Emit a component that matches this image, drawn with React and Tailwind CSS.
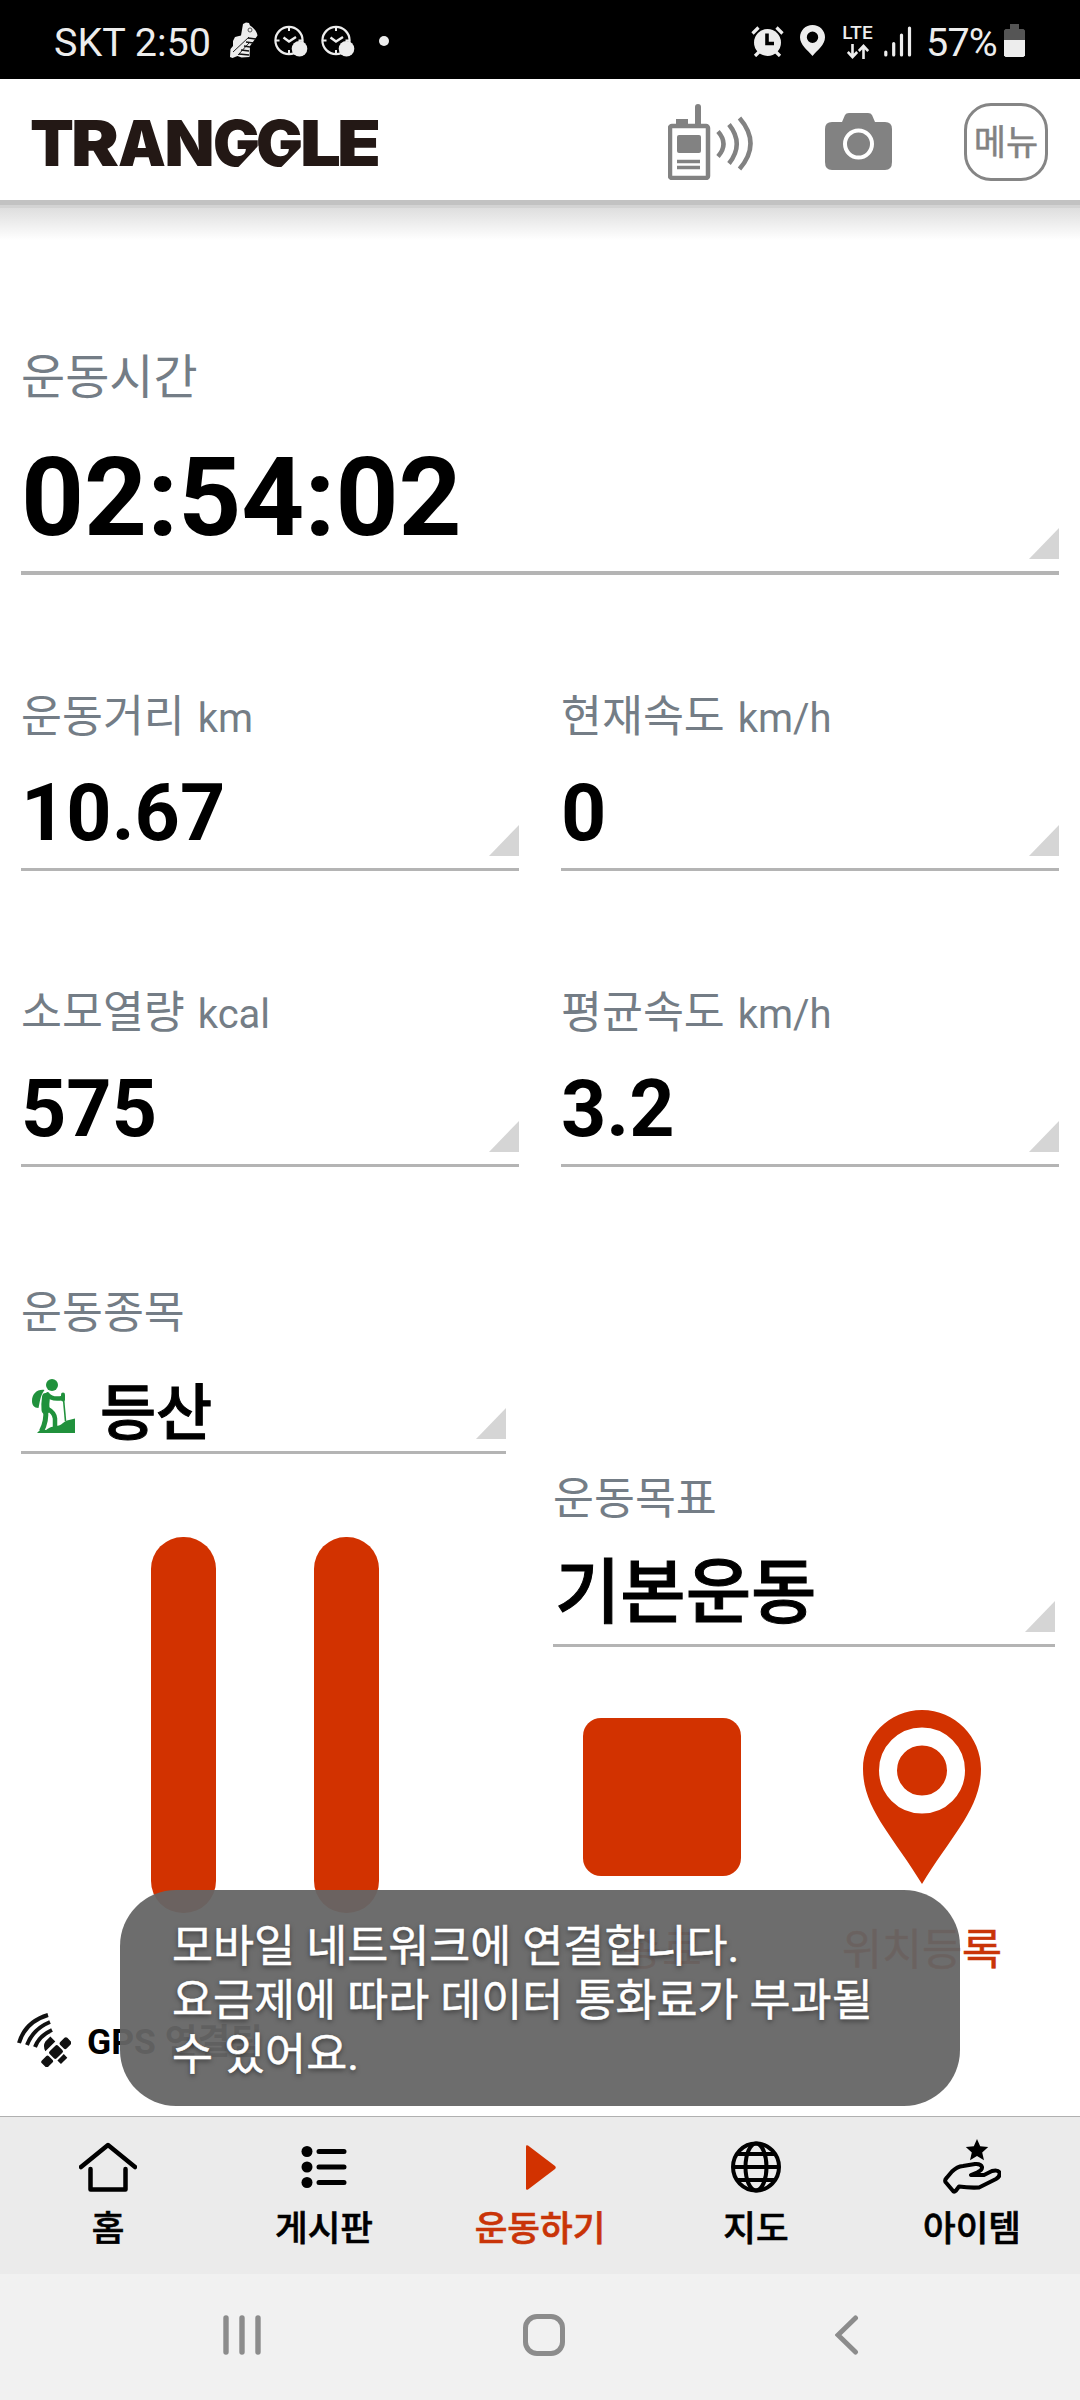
import React from "react";

const StatusClock = () => (
  <svg className="w-[34px] h-[32px]" viewBox="0 0 34 32" fill="none">
    <circle cx="15" cy="15.5" r="13.6" stroke="#ededed" strokeWidth="2.2" />
    <path d="M15 2v4M15 25v4M1.5 15.5h4M24.5 15.5h4" stroke="#ededed" strokeWidth="2" />
    <path d="M9.5 12.5l5.5 4 7-4.5" stroke="#ededed" strokeWidth="2.4" />
    <circle cx="25.5" cy="23.8" r="7.8" fill="#ededed" />
  </svg>
);

const StatusBar = () => (
  <div className="h-[79px] bg-black flex items-center text-[#ededed] text-[39.5px] leading-[40px] pl-[54px] pr-[55px] pt-[2px]">
    <span className="w-[175px] whitespace-nowrap pt-[4px]">SKT 2:50</span>
    <svg className="w-[29px] h-[38px] mr-4" viewBox="0 0 29 38">
      <path d="M14 2l3-1.500 3 .5 1 2.500c4 2.500 7 6 7.500 10l-3.500 5-4 5.500-.500 11-8 .5-4-1.500-5 2-2.500-1 .5-8 2.500-3 0-5 2-4 6-1.500z" fill="#ededed" />
      <path d="M4 30L20 15M9 33l11-12" stroke="#222" strokeWidth="1" fill="none" />
      <path d="M19 16l8 1M17 20l7.500 1M15 24l6 1M12 28l8 1M10 32l10 1" stroke="#111" strokeWidth="1.300" fill="none" />
      <circle cx="21" cy="8" r="2" fill="none" stroke="#555" strokeWidth="1" />
    </svg>
    <div className="flex gap-[13px]">
      <StatusClock />
      <StatusClock />
    </div>
    <div className="w-[10px] h-[10px] ml-[24px] rounded-full bg-[#ededed]" />

    <svg className="w-[33px] h-[32px] ml-auto" viewBox="0 0 33 32">
      <circle cx="16.500" cy="17.500" r="13.500" fill="#ededed" />
      <path d="M1.500 8.500l6-6M31.500 8.500l-6-6M4 31l4-4M29 31l-4-4" stroke="#ededed" strokeWidth="3.200" />
      <path d="M16 8.500v10h7" stroke="#000" strokeWidth="3.600" fill="none" />
    </svg>
    <svg className="w-[25px] h-[31px] ml-4" viewBox="0 0 25 31">
      <path fillRule="evenodd" d="M12.500 0C5.500 0 0 5.500 0 12.300 0 20 7.500 25 12.500 31 17.500 25 25 20 25 12.300 25 5.500 19.500 0 12.500 0zm0 6.500a5.700 5.700 0 1 1 0 11.400 5.700 5.700 0 0 1 0-11.400z" fill="#ededed" />
    </svg>
    <div className="w-[31px] ml-[17px] mt-[2px] flex flex-col items-center">
      <span className="text-[19px] leading-[16px] font-medium">LTE</span>
      <svg className="w-[22px] h-[15px] mt-[3px]" viewBox="0 0 22 15">
        <path d="M5.500 0v13M.8 8l4.700 5 4.700-5M16.500 15V2M11.800 7l4.700-5 4.700 5" stroke="#ededed" strokeWidth="2.600" fill="none" />
      </svg>
    </div>
    <svg className="w-[28px] h-[31px] ml-[11px] mt-[2px]" viewBox="0 0 28 31">
      <path d="M1.800 26v3M9.700 17.500V29M17.500 9v20M25.500 2v27" stroke="#ededed" strokeWidth="3.200" strokeLinecap="round" />
    </svg>
    <span className="ml-[14px] w-[71px] tracking-[-0.800px] whitespace-nowrap pt-[4px]">57%</span>
    <svg className="w-[21px] h-[33px] ml-[7px]" viewBox="0 0 21 33">
      <path d="M6 0h9v5h4.500l1.500 1.500V16H0V6.500L1.500 5H6z" fill="#555" />
      <path d="M0 16h21v15.500l-1.500 1.500h-18L0 31.500z" fill="#ededed" />
    </svg>
  </div>
);

const Logo = () => (
  <svg className="w-[350px] h-[60px] overflow-visible" viewBox="0 0 350 60">
    <text y="55.500" fill="#231815" className="font-['Inter'] font-black text-[63px]">
      <tspan x="-1" textLength="44" lengthAdjust="spacingAndGlyphs">T</tspan>
      <tspan x="40" textLength="48" lengthAdjust="spacingAndGlyphs">R</tspan>
      <tspan x="87" textLength="48" lengthAdjust="spacingAndGlyphs">A</tspan>
      <tspan x="133.500" textLength="50" lengthAdjust="spacingAndGlyphs">N</tspan>
      <tspan x="182" textLength="47" lengthAdjust="spacingAndGlyphs">G</tspan>
      <tspan x="225" textLength="47" lengthAdjust="spacingAndGlyphs">G</tspan>
      <tspan x="269" textLength="41" lengthAdjust="spacingAndGlyphs">L</tspan>
      <tspan x="306" textLength="44" lengthAdjust="spacingAndGlyphs">E</tspan>
    </text>
    {/* slanted corner of the two Gs */}
    <path d="M227.500 35.500v22H207zM271.500 35.500v22H250z" fill="#fff" />
  </svg>
);

const Header = () => (
  <>
    <div className="h-[121px] bg-white flex items-center pl-[31px] pr-8">
      <Logo />
      <svg className="w-[85px] h-[76px] ml-auto mt-[5px]" viewBox="0 0 85 76" fill="none">
        <rect x="2" y="22" width="38" height="52" rx="2" stroke="#828282" strokeWidth="4.500" />
        <path d="M8 15h12v6H8z" fill="#828282" />
        <path d="M30 3v18" stroke="#828282" strokeWidth="6" strokeLinecap="round" />
        <rect x="9" y="31" width="24" height="18" rx="2" fill="#828282" />
        <path d="M9 57.500h23M9 63.500h23" stroke="#828282" strokeWidth="3.500" />
        <path d="M50 27.500q11 12.500 0 25M61 20.500q15.500 19.500 0 39M71.500 14q22 25.500 0 51" stroke="#828282" strokeWidth="4.500" />
      </svg>
      <svg className="w-[67px] h-[57px] ml-[72px] mt-1" viewBox="0 0 67 57">
        <path d="M7 9h10l3-7q1-2 4-2h19q3 0 4 2l3 7h10q7 0 7 7v33q0 8-7 8H7q-7 0-7-8V16q0-7 7-7z" fill="#828282" />
        <circle cx="33.500" cy="31" r="13.500" fill="none" stroke="#fff" strokeWidth="4" />
      </svg>
      <div className="w-[84px] h-[78px] ml-[72px] mt-1 pt-[6px] rounded-[27px] border-[3px] border-[#858585] text-[#828282] flex items-center justify-center text-[35px] [-webkit-text-stroke:0.5px]">
        메뉴
      </div>
    </div>
    <div className="h-[5px] bg-[#c2c2c2]" />
    <div className="h-[3px] bg-[#d3d3d3]" />
    <div className="h-8 bg-gradient-to-b from-[#dedede] to-white" />
  </>
);

const Corner = () => (
  <svg className="w-[30px] h-[31px] mb-3 ml-auto" viewBox="0 0 30 31">
    <path d="M30 0v31H0z" fill="#d5d5d5" />
  </svg>
);

const Metric = ({ label, unit, value }) => (
  <div className="h-[182px]">
    <div className="h-14 leading-[56px] text-[44.5px] text-[#747d86] flex">
      {label}
      <span className="text-[40px] ml-[13px] pt-[2px]">{unit}</span>
    </div>
    <div className="h-[126px] border-b-[3px] border-[#b4b4b4] flex items-end">
      <span className="self-start mt-7 text-[79px] leading-[80px] font-bold">{value}</span>
      <Corner />
    </div>
  </div>
);

const Hiker = () => (
  <svg className="w-[43px] h-[54px]" viewBox="0 0 43 54" fill="none">
    <circle cx="20" cy="6" r="6" fill="#20913c" />
    <path d="M12.500 11C5 10 0 15 0 22c0 4 2 7 6.500 7C8 23 8 17 12.500 11z" fill="#20913c" />
    <path d="M14 18q-1 7-.5 13" stroke="#20913c" strokeWidth="8" strokeLinecap="round" />
    <path d="M15.500 15.500q4 5.500 15 3.500" stroke="#20913c" strokeWidth="4.500" strokeLinecap="round" />
    <path d="M13.500 30q1.500 12-4 22" stroke="#20913c" strokeWidth="5" />
    <path d="M15 29.500q7.500 4 8 10v9" stroke="#20913c" strokeWidth="4.500" />
    <path d="M31 15.500v5" stroke="#20913c" strokeWidth="4" strokeLinecap="round" />
    <path d="M31.500 20l2 22" stroke="#20913c" strokeWidth="1.600" />
    <path d="M5 54l4-4 5 1c5-4 9-3.500 13-4.500 3-1 5-4 8-5L43 39.500V54z" fill="#20913c" />
  </svg>
);

const tabs = [
  {
    name: "홈",
    icon: (
      <svg className="w-[58px] h-[54px]" viewBox="0 0 58 54" fill="none" stroke="currentColor" strokeWidth="4.500" strokeLinecap="round" strokeLinejoin="round">
        <path d="M2 27L29 5l27 22M11.500 29v20.500h35V29" />
      </svg>
    ),
  },
  {
    name: "게시판",
    icon: (
      <svg className="w-[46px] h-[54px]" viewBox="0 0 46 54" stroke="currentColor" strokeWidth="5" strokeLinecap="round">
        <path d="M18 11.500h25M18 27h25M18 42.500h25" />
        <g fill="currentColor" stroke="none">
          <circle cx="6" cy="11.500" r="5.500" />
          <circle cx="6" cy="27" r="5.500" />
          <circle cx="6" cy="42.500" r="5.500" />
        </g>
      </svg>
    ),
  },
  {
    name: "운동하기",
    active: true,
    icon: (
      <svg className="w-[30px] h-[54px] ml-[2px]" viewBox="0 0 30 54" fill="#d23200">
        <path d="M0 6.500q0-2 2-1L29 26q1.500 1.500 0 3L2 49.500q-2 1-2-1z" />
      </svg>
    ),
  },
  {
    name: "지도",
    icon: (
      <svg className="w-[50px] h-[54px]" viewBox="0 0 50 54" fill="none" stroke="currentColor" strokeWidth="4">
        <ellipse cx="25" cy="27" rx="23" ry="23.500" />
        <ellipse cx="25" cy="27" rx="10.500" ry="23.500" />
        <path d="M2 27h46M6 14h38M6 40h38" />
      </svg>
    ),
  },
  {
    name: "아이템",
    icon: (
      <svg className="w-[58px] h-[56px]" viewBox="0 0 58 56" fill="none" stroke="currentColor" strokeWidth="4" strokeLinejoin="round">
        <path d="M34 0l3.200 7.300 8 .8-6 5.300 1.800 7.900-7-4.200-7 4.200 1.800-7.900-6-5.300 8-.8z" fill="currentColor" stroke="none" />
        <path d="M10.500 52.500L2.500 43q-1-2 1-4L9 32.500q5-5 11-5.500l12-2q6-.5 7 3 .5 3-5 5.500L28 36h13l8-4q6-1.500 7.500 1.500 1 4-3.500 6.500L36 48.500q-10 .5-20-1l-3 4q-1.500 1.500-2.500 1z" />
      </svg>
    ),
  },
];

const TabBar = () => (
  <div className="h-[158px] bg-[#ebebeb] border-t border-[#b0b0b0] grid grid-cols-5">
    {tabs.map((tab) => (
      <div
        key={tab.name}
        className={
          tab.active
            ? "flex flex-col items-center pt-[22px] text-[#c93408]"
            : "flex flex-col items-center pt-[22px] text-black"
        }
      >
        <div className="h-14 flex items-center">{tab.icon}</div>
        <span className="mt-[13px] text-[35.500px] leading-[42px] font-medium [-webkit-text-stroke:0.6px]">{tab.name}</span>
      </div>
    ))}
  </div>
);

const App = () => {
  return (
    <div className="relative w-[1080px] h-[2400px] overflow-hidden bg-white text-black font-['Roboto','Noto_Sans_CJK_KR',sans-serif]">
      <StatusBar />
      <Header />

      <div className="h-[1876px] pl-[21px] pr-[21px] pt-[110px]">
        <div className="h-[225px]">
          <div className="h-14 leading-[56px] text-[48px] text-[#747d86]">운동시간</div>
          <div className="h-[169px] border-b-4 border-[#b4b4b4] flex items-end">
            <span className="self-start mt-[42px] text-[110px] leading-[100px] font-bold">02:54:02</span>
            <Corner />
          </div>
        </div>

        <div className="grid grid-cols-2 gap-x-[42px] gap-y-[114px] mt-[114px]">
          <Metric label="운동거리" unit="km" value="10.67" />
          <Metric label="현재속도" unit="km/h" value="0" />
          <Metric label="소모열량" unit="kcal" value="575" />
          <Metric label="평균속도" unit="km/h" value="3.2" />
        </div>

        <div className="flex h-[720px] mt-[118px]">
          <div className="w-[485px]">
            <div className="h-14 leading-[56px] text-[44.5px] text-[#747d86]">운동종목</div>
            <div className="h-[113px] border-b-[3px] border-[#b4b4b4] flex items-end">
              <div className="self-start mt-[38px] ml-[11px]">
                <Hiker />
              </div>
              <span className="self-start mt-[43px] ml-[25px] text-[61px] leading-[60px] font-medium [-webkit-text-stroke:1px]">등산</span>
              <Corner />
            </div>
            <div className="flex gap-[98px] ml-[130px] mt-[83px]">
              <div className="w-[65px] h-[376px] rounded-[32px] bg-[#d23200]" />
              <div className="w-[65px] h-[376px] rounded-[32px] bg-[#d23200]" />
            </div>
          </div>

          <div className="w-[502px] ml-[47px] pt-[186px]">
            <div className="h-14 leading-[56px] text-[44.5px] text-[#747d86]">운동목표</div>
            <div className="h-[120px] border-b-[3px] border-[#b4b4b4] flex items-end">
              <span className="self-start mt-[30px] ml-[2px] text-[71px] leading-[72px] font-medium [-webkit-text-stroke:1px]">기본운동</span>
              <Corner />
            </div>
            <div className="flex mt-[63px] text-[43.5px] leading-[56px] text-[#c93408]">
              <div className="w-[158px] ml-[30px] flex flex-col items-center">
                <div className="w-[158px] h-[158px] mt-[8px] rounded-[18px] bg-[#d23200]" />
                <span className="mt-[47px]">종료</span>
              </div>
              <div className="w-[164px] ml-[99px] flex flex-col items-center">
                <svg className="w-[118px] h-[174px]" viewBox="0 0 118 174">
                  <path d="M59 0C26 0 0 27 0 59c0 40 30 67 59 115 29-48 59-75 59-115C118 27 92 0 59 0z" fill="#d23200" />
                  <circle cx="59" cy="60.500" r="34" fill="none" stroke="#fff" strokeWidth="18" />
                </svg>
                <span className="mt-[39px] [-webkit-text-stroke:0.6px]">위치등록</span>
              </div>
            </div>
          </div>
        </div>

        <div className="flex items-center h-[54px] mt-2 -ml-1">
          <svg className="w-[54px] h-[54px]" viewBox="0 0 54 54" fill="none" stroke="#111">
            <path d="M2 30Q8 9 31 2M10 32q6-16 23-23M18 34q4-11 17-17" strokeWidth="4" />
            <g transform="rotate(45 39 39)" fill="#111" stroke="none">
              <rect x="34" y="33" width="10" height="12" rx="2" />
              <rect x="35" y="21" width="9" height="10" rx="2" />
              <rect x="35" y="47" width="9" height="10" rx="2" />
              <path d="M24 32h7v14q-6-2-7-7zM46 35h5v9h-5z" />
            </g>
          </svg>
          <span className="ml-4 pt-[3px] text-[35.500px] leading-[40px] font-bold">GPS 연결됨</span>
        </div>
      </div>

      <TabBar />

      <div className="h-[126px] bg-[#f1f1f1] flex items-center pl-[223px] pb-1">
        <svg className="w-[38px] h-10" viewBox="0 0 38 40" stroke="#8c8c8c" strokeWidth="5.400" strokeLinecap="round">
          <path d="M3 3v34M19 3v34M35 3v34" />
        </svg>
        <div className="w-[42px] h-[42px] ml-[262px] rounded-[14px] border-[5px] border-[#8c8c8c]" />
        <svg className="w-[24px] h-10 ml-[270px]" viewBox="0 0 24 40" fill="none" stroke="#8c8c8c" strokeWidth="5" strokeLinecap="round">
          <path d="M20.500 3L3 20l17.500 17" />
        </svg>
      </div>

      {/* network toast */}
      <div className="absolute left-[120px] top-[1890px] w-[840px] h-[216px] rounded-[56px] bg-[#656565]/95 pl-[52px] pt-[30px] text-white text-[44.600px] leading-[54px] [-webkit-text-stroke:0.5px] [text-shadow:0_2px_5px_rgba(0,0,0,0.5)]">
        모바일 네트워크에 연결합니다.
        <br />
        요금제에 따라 데이터 통화료가 부과될
        <br />수 있어요.
      </div>
    </div>
  );
};

export default App;
